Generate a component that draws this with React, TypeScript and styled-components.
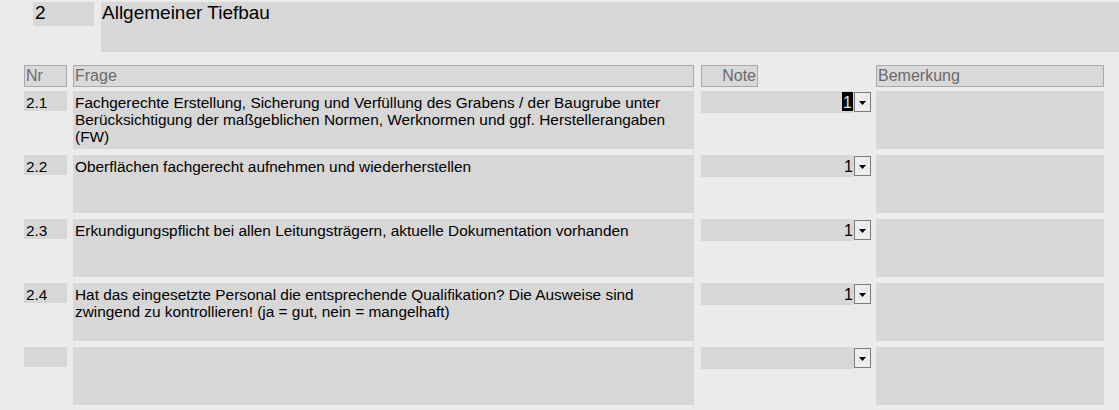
import React from 'react';
import styled, {createGlobalStyle} from 'styled-components';

type Question = {
  nr: string
  text: string
  note: string
  selected?: boolean
}

const questions: Question[] = [
  {
    nr: '2.1',
    text: 'Fachgerechte Erstellung, Sicherung und Verfüllung des Grabens / der Baugrube unter Berücksichtigung der maßgeblichen Normen, Werknormen und ggf. Herstellerangaben (FW)',
    note: '1',
    selected: true,
  },
  {nr: '2.2', text: 'Oberflächen fachgerecht aufnehmen und wiederherstellen', note: '1'},
  {nr: '2.3', text: 'Erkundigungspflicht bei allen Leitungsträgern, aktuelle Dokumentation vorhanden', note: '1'},
  {
    nr: '2.4',
    text: 'Hat das eingesetzte Personal die entsprechende Qualifikation? Die Ausweise sind zwingend zu kontrollieren! (ja = gut, nein = mangelhaft)',
    note: '1',
  },
  {nr: '', text: '', note: ''},
]

const GlobalStyle = createGlobalStyle`
  body {
    margin: 0;
    background: #ebebeb;
    font-family: "Liberation Sans", Arial, sans-serif;
    color: #000;
  }
`

export default function App() {
  return (
    <Page>
      <GlobalStyle/>
      <Section>
        <SectionNr>2</SectionNr>
        <SectionTitle>Allgemeiner Tiefbau</SectionTitle>
      </Section>
      <Table>
        <HeaderRow>
          <HeadCell>Nr</HeadCell>
          <HeadCell>Frage</HeadCell>
          <NoteHead><HeadCell align="right">Note</HeadCell></NoteHead>
          <HeadCell>Bemerkung</HeadCell>
        </HeaderRow>
        {questions.map((q, i) =>
          <Row key={i}>
            <NrCell>{q.nr}</NrCell>
            <TextCell>{q.text}</TextCell>
            <NoteSelect>
              <NoteValue>
                {q.note && (q.selected ? <Selected>{q.note}</Selected> : q.note)}
              </NoteValue>
              <DropButton>
                <svg width="7" height="4" viewBox="0 0 7 4">
                  <path d="M0 0h7L3.5 4z" fill="#000"/>
                </svg>
              </DropButton>
            </NoteSelect>
            <RemarkCell/>
          </Row>
        )}
      </Table>
    </Page>
  );
}

const Page = styled.div`
  width: 1119px;
  height: 410px;
  overflow: hidden;
`
const Section = styled.div`
  display: flex;
  gap: 7px;
  padding: 2px 0 0 33px;
`
const SectionNr = styled.div`
  width: 59px;
  height: 24px;
  padding-left: 2px;
  background: #d7d7d7;
  font-size: 19px;
  line-height: 22px;
`
const SectionTitle = styled.div`
  flex: 1;
  height: 50px;
  padding-left: 1px;
  background: #d7d7d7;
  font-size: 19px;
  line-height: 22px;
`
const Table = styled.div`
  display: flex;
  flex-direction: column;
  gap: 6px;
  padding: 13px 0 0 24px;
`
const Columns = styled.div`
  display: grid;
  grid-template-columns: 43px 621px 171px 227px;
  column-gap: 6px;
  & > :nth-child(3) { margin-left: 1px; }
  & > :nth-child(4) { margin-left: -1px; }
`
const HeaderRow = styled(Columns)`
  height: 22px;
  margin-bottom: -2px;
`
const HeadCell = styled.div<{align?: 'left' | 'right'}>`
  height: 20px;
  border: 1px solid #a9a9a9;
  background: #d9d9d9;
  color: #6b6b6b;
  font-size: 16px;
  line-height: 19px;
  padding: 0 1px;
  text-align: ${({align}) => align || 'left'};
  overflow: hidden;
  white-space: nowrap;
`
const NoteHead = styled.div`
  width: 57px;
  & > div { width: 53px; padding: 0 1px; }
`
const Row = styled(Columns)`
  height: 58px;
`
const NrCell = styled.div`
  height: 20px;
  padding: 3px 2px 0;
  box-sizing: border-box;
  background: #d7d7d7;
  font-size: 15.4px;
  line-height: 17px;
`
const TextCell = styled.div`
  height: 58px;
  padding: 3px 2px 0;
  box-sizing: border-box;
  background: #d7d7d7;
  font-size: 15.4px;
  line-height: 17px;
`
const NoteSelect = styled.div`
  display: flex;
  height: 22px;
  width: 170px;
`
const NoteValue = styled.div`
  flex: 1;
  background: #d7d7d7;
  text-align: right;
  font-size: 16px;
  line-height: 17px;
  padding: 3px 1px 0 0;
  box-sizing: border-box;
`
const Selected = styled.span`
  display: inline-block;
  background: #000;
  color: #d2f2d2;
  height: 19px;
  margin-top: -2px;
  padding: 2px 1px 0;
  box-sizing: border-box;
`
const DropButton = styled.div`
  width: 17px;
  height: 20px;
  margin-top: 1px;
  box-sizing: border-box;
  border: 1px solid #7c7c7c;
  background: #ededed;
  display: flex;
  align-items: center;
  justify-content: center;
  padding-top: 1px;
`
const RemarkCell = styled.div`
  height: 58px;
  background: #d7d7d7;
`
